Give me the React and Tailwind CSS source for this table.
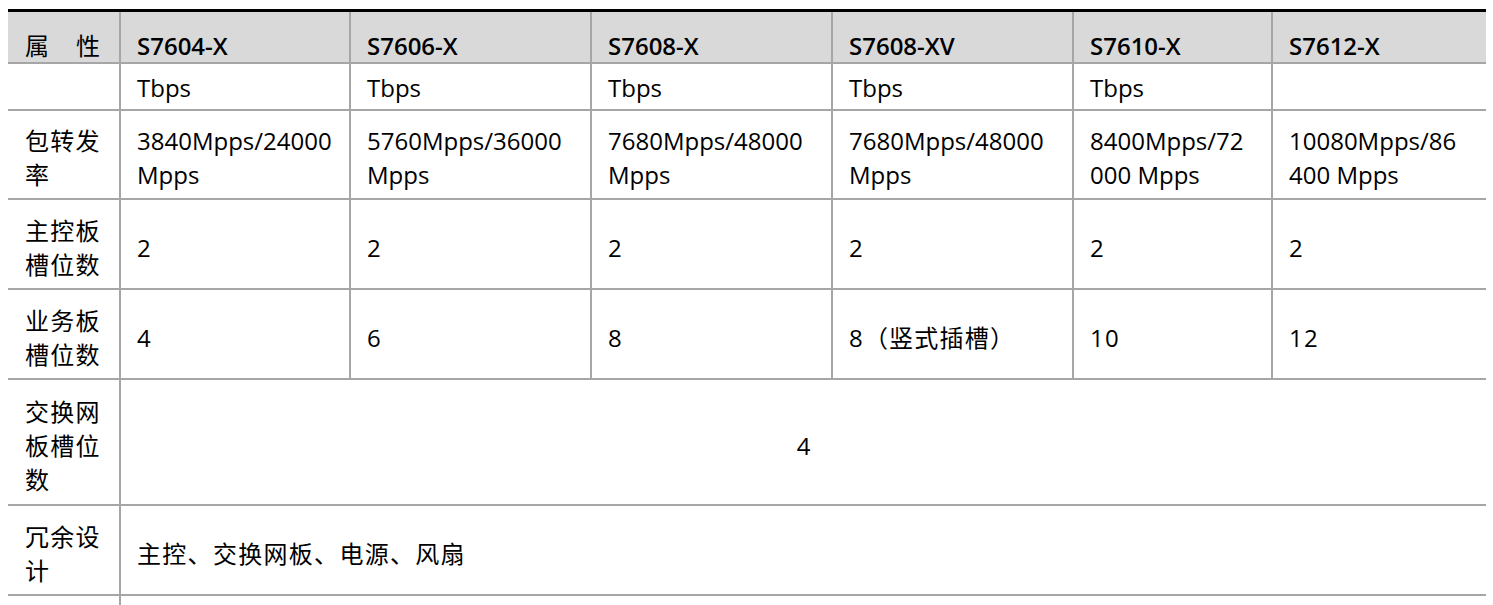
const models = ["S7604-X", "S7606-X", "S7608-X", "S7608-XV", "S7610-X", "S7612-X"];

const rate = [
  ["3840Mpps/24000", "Mpps"],
  ["5760Mpps/36000", "Mpps"],
  ["7680Mpps/48000", "Mpps"],
  ["7680Mpps/48000", "Mpps"],
  ["8400Mpps/72", "000 Mpps"],
  ["10080Mpps/86", "400 Mpps"],
];

const line = "border-[#a6a6a6]";

function Cell({ children, last, className = "h-[90px] pt-[7px]" }) {
  return (
    <div className={`flex items-center pl-4 border-b-2 ${line} ${last ? "" : "border-r-2"} ${className}`}>
      <div>{children}</div>
    </div>
  );
}

function Label({ children, className = "h-[90px] pt-[7px]" }) {
  return (
    <div className={`flex items-center pl-[17px] border-b-2 border-r-2 ${line} ${className}`}>
      <div className="tracking-[1.2px]">{children}</div>
    </div>
  );
}

export default function App() {
  return (
    <div
      className="w-[1493px] h-[605px] overflow-hidden bg-white text-black text-[24px] leading-[34px]"
      style={{ fontFamily: '"Open Sans", "Noto Sans CJK SC", sans-serif' }}
    >
      <div className="ml-[8px] mt-[9px] w-[1478px] border-t-[3px] border-black grid grid-cols-[113px_230px_241px_241px_241px_199px_213px]">
        {/* header */}
        <div className={`h-[52px] bg-[#d9d9d9] border-b-2 border-r-2 ${line} flex items-end pl-[17px] pb-[1px]`}>
          <div className="w-[75px] flex justify-between leading-[30px]">
            <span>属</span>
            <span>性</span>
          </div>
        </div>
        {models.map((m, i) => (
          <div
            key={m}
            className={`h-[52px] bg-[#d9d9d9] border-b-2 ${line} ${i < 5 ? "border-r-2" : ""} flex items-end pl-4 pb-[1px] font-semibold leading-[30px]`}
          >
            {m}
          </div>
        ))}

        {/* Tbps */}
        <Label className="h-[47px]" />
        {models.map((m, i) => (
          <Cell key={m} last={i === 5} className="h-[47px] pt-[3px]">
            {i < 5 ? "Tbps" : ""}
          </Cell>
        ))}

        {/* rate */}
        <Label className="h-[89px] pt-[7px]">
          包转发
          <br />率
        </Label>
        {rate.map((r, i) => (
          <Cell key={i} last={i === 5} className="h-[89px] pt-[7px]">
            {r[0]}
            <br />
            {r[1]}
          </Cell>
        ))}

        {/* main control slots */}
        <Label>
          主控板
          <br />
          槽位数
        </Label>
        {models.map((m, i) => (
          <Cell key={m} last={i === 5}>
            2
          </Cell>
        ))}

        {/* service slots */}
        <Label>
          业务板
          <br />
          槽位数
        </Label>
        {["4", "6", "8", "8（竖式插槽）", "10", "12"].map((v, i) => (
          <Cell key={i} last={i === 5}>
            <span className="tracking-[1.2px]">{v}</span>
          </Cell>
        ))}

        {/* switch fabric slots */}
        <Label className="h-[126px] pt-[7px]">
          交换网
          <br />
          板槽位
          <br />数
        </Label>
        <div className={`col-span-6 h-[126px] border-b-2 ${line} flex items-center justify-center pt-[7px]`}>
          4
        </div>

        {/* redundancy */}
        <Label>
          冗余设
          <br />计
        </Label>
        <div className={`col-span-6 h-[90px] border-b-2 ${line} flex items-center pl-4 pt-[7px] tracking-[1.3px]`}>
          主控、交换网板、电源、风扇
        </div>

        {/* next row, cut off */}
        <div className={`h-[40px] border-r-2 ${line}`} />
        <div className="col-span-6 h-[40px]" />
      </div>
    </div>
  );
}
